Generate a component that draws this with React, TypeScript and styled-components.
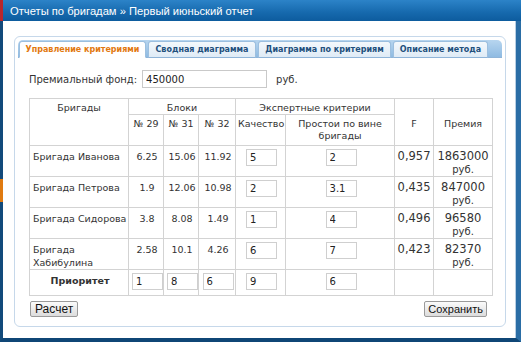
import React, { useState } from 'react';
import styled, { createGlobalStyle } from 'styled-components';

const GlobalStyle = createGlobalStyle`
  html, body {
    margin: 0;
    padding: 0;
    background: #ffffff;
  }
  * {
    box-sizing: border-box;
  }
`;

const Frame = styled.div`
  width: 521px;
  height: 342px;
  display: flex;
  flex-direction: column;
  background: #ffffff;
  font-family: "DejaVu Sans", Verdana, sans-serif;
  color: #333333;
`;

const TitleBar = styled.div`
  height: 21px;
  flex: none;
  display: flex;
  align-items: center;
  padding-left: 7px;
  border-left: 3px solid #b8262c;
  background: linear-gradient(#2c83c8, #1669ad 60%, #0d5c9e);
  color: #ffffff;
  font-family: "Liberation Sans", Arial, sans-serif;
  font-size: 11.2px;
  white-space: nowrap;
`;

const Body = styled.div`
  position: relative;
  flex: 1;
  display: flex;
  flex-direction: column;
  padding: 15px 10px 11px 11px;
  border-left: 3px solid #124a7b;
  border-right: 5px solid #2a6da5;
  border-bottom: 4px solid #0f4676;
  box-shadow: inset -1px 0 0 #b9cfe3;

  &::before {
    content: '';
    position: absolute;
    left: -3px;
    top: 158px;
    width: 3px;
    height: 23px;
    background: #e07a10;
  }
`;

const Panel = styled.div`
  flex: 1;
  display: flex;
  flex-direction: column;
  border: 1px solid #c6d8ea;
  border-radius: 6px;
  padding: 3px 3px 0 3px;
`;

const TabStrip = styled.div`
  height: 18px;
  display: flex;
  align-items: flex-end;
  gap: 2px;
  padding-left: 1px;
  border-radius: 5px 5px 0 0;
  background: linear-gradient(#b7d5ef, #8fbbe2);
  border-bottom: 1px solid #8fb4d8;
`;

const Tab = styled.div<{ $active?: boolean; $width: number }>`
  height: 17px;
  margin-bottom: -1px;
  display: flex;
  align-items: center;
  justify-content: center;
  width: ${(p) => p.$width}px;
  border: 1px solid #9cbfdf;
  border-bottom: ${(p) => (p.$active ? '1px solid #ffffff' : '1px solid #8fb4d8')};
  border-radius: 3px 3px 0 0;
  background: ${(p) => (p.$active ? '#ffffff' : 'linear-gradient(#f3f8fc, #dfebf6)')};
  color: ${(p) => (p.$active ? '#e2780e' : '#214f7c')};
  font-weight: bold;
  font-size: 8px;
  white-space: nowrap;
  cursor: pointer;
`;

const Content = styled.div`
  flex: 1;
  display: flex;
  flex-direction: column;
  padding: 12px 9px 0 11px;
`;

const FundRow = styled.div`
  display: flex;
  align-items: center;
  height: 18px;
  font-size: 10px;
`;

const FundInput = styled.input`
  width: 125px;
  height: 18px;
  margin: 0 9px 0 5px;
  padding: 1px 3px;
  border: 1px solid #c9c9c9;
  font-family: "DejaVu Sans", Verdana, sans-serif;
  font-size: 10px;
  color: #222;
  outline: none;
`;

const Grid = styled.table`
  margin-top: 10px;
  border-collapse: collapse;
  table-layout: fixed;
  width: 463px;
  font-size: 9.5px;
`;

const Head = styled.th<{ $middle?: boolean }>`
  border: 1px solid #d3d3d3;
  font-weight: normal;
  text-align: center;
  vertical-align: ${(p) => (p.$middle ? 'middle' : 'top')};
  padding: 3px 2px 0;
  line-height: 12px;
  font-size: 9.5px;
`;

const Cell = styled.td<{ $align?: string; $big?: boolean; $bold?: boolean }>`
  border: 1px solid #d3d3d3;
  text-align: ${(p) => p.$align || 'center'};
  vertical-align: top;
  padding: ${(p) => (p.$big ? '4px 1px 0' : '4px 1px 0 3px')};
  font-size: ${(p) => (p.$big ? '11.5px' : '9.5px')};
  font-weight: ${(p) => (p.$bold ? 'bold' : 'normal')};
  line-height: 13px;
  color: #333;
  white-space: ${(p) => (p.$align === 'left' ? 'normal' : 'nowrap')};
`;

const Unit = styled.div`
  font-size: 10px;
  line-height: 13px;
`;

const SmallInput = styled.input`
  display: block;
  margin: -1px auto 0;
  width: 31px;
  height: 17px;
  padding: 1px 3px;
  border: 1px solid #cfcfcf;
  font-family: "DejaVu Sans", Verdana, sans-serif;
  font-size: 10px;
  color: #222;
  outline: none;
`;

const ButtonRow = styled.div`
  width: 458px;
  display: flex;
  justify-content: space-between;
  margin-top: 5px;
  padding-left: 1px;
`;

const Button = styled.button`
  height: 16px;
  padding: 0 4px;
  border: 1px solid #9a9a9a;
  border-radius: 2px;
  background: linear-gradient(#fbfbfb, #dcdcdc);
  font-family: "Liberation Sans", Arial, sans-serif;
  font-size: 12px;
  line-height: 14px;
  color: #111;
`;

const SaveButton = styled(Button)`
  font-size: 11px;
  padding: 0 3px;
`;

const tabs = [
  { label: 'Управление критериями', width: 127 },
  { label: 'Сводная диаграмма', width: 108 },
  { label: 'Диаграмма по критериям', width: 133 },
  { label: 'Описание метода', width: 95 },
];

const brigades = [
  { name: 'Бригада Иванова', b: ['6.25', '15.06', '11.92'], q: '5', d: '2', f: '0,957', prize: '1863000' },
  { name: 'Бригада Петрова', b: ['1.9', '12.06', '10.98'], q: '2', d: '3.1', f: '0,435', prize: '847000' },
  { name: 'Бригада Сидорова', b: ['3.8', '8.08', '1.49'], q: '1', d: '4', f: '0,496', prize: '96580' },
  { name: 'Бригада Хабибулина', b: ['2.58', '10.1', '4.26'], q: '6', d: '7', f: '0,423', prize: '82370' },
];

const rowHeights = [30, 30, 30, 29];

const App = () => {
  const [fund, setFund] = useState('450000');
  const [active, setActive] = useState(0);

  return (
    <Frame>
      <GlobalStyle />
      <TitleBar>Отчеты по бригадам » Первый июньский отчет</TitleBar>
      <Body>
        <Panel>
          <TabStrip>
            {tabs.map((t, i) => (
              <Tab key={t.label} $width={t.width} $active={i === active} onClick={() => setActive(i)}>
                {t.label}
              </Tab>
            ))}
          </TabStrip>
          <Content>
            <FundRow>
              Премиальный фонд:
              <FundInput value={fund} onChange={(e) => setFund(e.target.value)} />
              руб.
            </FundRow>
            <Grid>
              <colgroup>
                <col style={{ width: 99 }} />
                <col style={{ width: 35 }} />
                <col style={{ width: 35 }} />
                <col style={{ width: 37 }} />
                <col style={{ width: 50 }} />
                <col style={{ width: 109 }} />
                <col style={{ width: 39 }} />
                <col style={{ width: 59 }} />
              </colgroup>
              <thead>
                <tr style={{ height: 16 }}>
                  <Head rowSpan={2}>Бригады</Head>
                  <Head colSpan={3}>Блоки</Head>
                  <Head colSpan={2}>Экспертные критерии</Head>
                  <Head rowSpan={2} $middle>F</Head>
                  <Head rowSpan={2} $middle>Премия</Head>
                </tr>
                <tr style={{ height: 31 }}>
                  <Head>№ 29</Head>
                  <Head>№ 31</Head>
                  <Head>№ 32</Head>
                  <Head>Качество</Head>
                  <Head>Простои по вине бригады</Head>
                </tr>
              </thead>
              <tbody>
                {brigades.map((r, i) => (
                  <tr key={r.name} style={{ height: rowHeights[i] }}>
                    <Cell $align="left">{r.name}</Cell>
                    {r.b.map((v, j) => (
                      <Cell key={j}>{v}</Cell>
                    ))}
                    <Cell>
                      <SmallInput defaultValue={r.q} />
                    </Cell>
                    <Cell>
                      <SmallInput defaultValue={r.d} />
                    </Cell>
                    <Cell $big>{r.f}</Cell>
                    <Cell $big>
                      {r.prize}
                      <Unit>руб.</Unit>
                    </Cell>
                  </tr>
                ))}
                <tr style={{ height: 26 }}>
                  <Cell $bold>Приоритет</Cell>
                  {['1', '8', '6', '9', '6'].map((v, j) => (
                    <Cell key={j}>
                      <SmallInput defaultValue={v} />
                    </Cell>
                  ))}
                  <Cell />
                  <Cell />
                </tr>
              </tbody>
            </Grid>
            <ButtonRow>
              <Button>Расчет</Button>
              <SaveButton>Сохранить</SaveButton>
            </ButtonRow>
          </Content>
        </Panel>
      </Body>
    </Frame>
  );
};

export default App;
